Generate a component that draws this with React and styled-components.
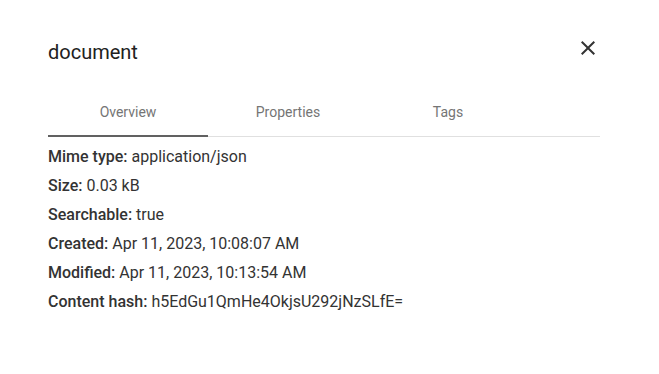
import React from 'react'
import styled, { createGlobalStyle } from 'styled-components'

const GlobalStyle = createGlobalStyle`
    html, body {
        margin: 0;
        padding: 0;
        background: #fff;
        font-family: Roboto, "Noto Sans", sans-serif;
    }
`;

const details = [
    ['Mime type', 'application/json'],
    ['Size', '0.03 kB'],
    ['Searchable', 'true'],
    ['Created', 'Apr 11, 2023, 10:08:07 AM'],
    ['Modified', 'Apr 11, 2023, 10:13:54 AM'],
    ['Content hash', 'h5EdGu1QmHe4OkjsU292jNzSLfE='],
]

const tabs = ['Overview', 'Properties', 'Tags']

const App = () => {
    const [active, setActive] = React.useState(0)

    return (
        <>
            <GlobalStyle />
            <Dialog>
                <Header>
                    <Title>document</Title>
                    <CloseButton aria-label='close'>
                        <svg width='24' height='24' viewBox='0 0 24 24'>
                            <path
                                d='M19 6.41 17.59 5 12 10.59 6.41 5 5 6.41 10.59 12 5 17.59 6.41 19 12 13.41 17.59 19 19 17.59 13.41 12z'
                                fill='#333'
                            />
                        </svg>
                    </CloseButton>
                </Header>
                <TabBar>
                    {tabs.map((t, i) => (
                        <Tab key={t} $active={i === active} onClick={() => setActive(i)}>
                            {t}
                        </Tab>
                    ))}
                </TabBar>
                <Details>
                    {details.map(([label, value]) => (
                        <Row key={label}>
                            <Label>{label}:</Label> {value}
                        </Row>
                    ))}
                </Details>
            </Dialog>
        </>
    )
}

const Dialog = styled.div`
    width: 552px;
    padding: 30px 59px 40px 48px;
`;

const Header = styled.div`
    display: flex;
    align-items: center;
    justify-content: space-between;
    height: 44px;
`;

const Title = styled.h2`
    margin: 0;
    font-size: 20px;
    font-weight: 400;
    color: #212121;
`;

const CloseButton = styled.button`
    background: none;
    border: none;
    padding: 0;
    margin-top: -8px;
    width: 24px;
    height: 24px;
    cursor: pointer;
`;

const TabBar = styled.div`
    display: flex;
    margin-top: 15px;
    border-bottom: 1px solid #e0e0e0;
`;

const Tab = styled.button`
    width: 160px;
    height: 48px;
    background: none;
    border: none;
    padding: 0;
    margin-bottom: -1px;
    font-family: Roboto, sans-serif;
    font-size: 14px;
    color: #757575;
    border-bottom: 2px solid ${p => (p.$active ? '#616161' : 'transparent')};
    cursor: pointer;
`;

const Details = styled.div`
    padding-top: 5px;
`;

const Row = styled.div`
    font-size: 16px;
    line-height: 29px;
    color: #333;
`;

const Label = styled.span`
    font-weight: 500;
`;

export default App
